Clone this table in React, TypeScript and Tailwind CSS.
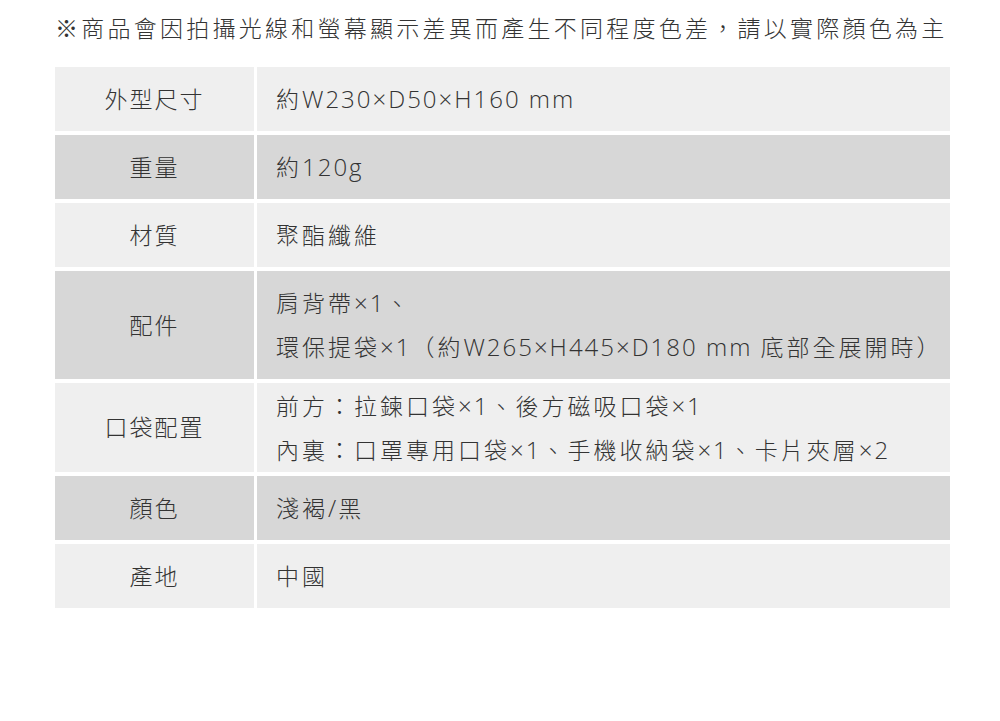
import React from "react";

const font = { fontFamily: '"Open Sans", "Noto Sans CJK TC", sans-serif' };

type Row = { label: string; lines: string[]; h: string; dark: boolean };

const rows: Row[] = [
  { label: "外型尺寸", lines: ["約W230×D50×H160 mm"], h: "h-[64px]", dark: false },
  { label: "重量", lines: ["約120g"], h: "h-[64px]", dark: true },
  { label: "材質", lines: ["聚酯纖維"], h: "h-[64px]", dark: false },
  {
    label: "配件",
    lines: ["肩背帶×1、", "環保提袋×1（約W265×H445×D180 mm 底部全展開時）"],
    h: "h-[108px]",
    dark: true,
  },
  {
    label: "口袋配置",
    lines: ["前方：拉鍊口袋×1、後方磁吸口袋×1", "內裏：口罩專用口袋×1、手機收納袋×1、卡片夾層×2"],
    h: "h-[89px]",
    dark: false,
  },
  { label: "顏色", lines: ["淺褐/黑"], h: "h-[64px]", dark: true },
  { label: "產地", lines: ["中國"], h: "h-[64px]", dark: false },
];

function Mixed({ text }: { text: string }) {
  const parts = text.split(/([A-Za-z0-9×\/ .]+)/).filter((p) => p.length > 0);
  return (
    <>
      {parts.map((p, i) =>
        /^[A-Za-z0-9×\/ .]+$/.test(p) ? (
          <span key={i} className="text-[24px] tracking-[2px]">
            {p}
          </span>
        ) : (
          <span key={i} className="tracking-[3px]">
            {p}
          </span>
        )
      )}
    </>
  );
}

export default function App() {
  return (
    <div className="w-[1000px] h-[721px] bg-white text-[#333]" style={font}>
      <div className="pl-[55px] pt-[12px] h-[67px]">
        <p className="text-[23px] leading-[32px] tracking-[3.25px] font-light whitespace-nowrap">
          ※商品會因拍攝光線和螢幕顯示差異而產生不同程度色差，請以實際顏色為主
        </p>
      </div>
      <div className="ml-[55px] w-[895px] grid grid-cols-[199px_1fr] gap-x-[3px] gap-y-[4px]">
        {rows.map((r) => {
          const bg = r.dark ? "bg-[#d7d7d7]" : "bg-[#efefef]";
          return (
            <React.Fragment key={r.label}>
              <div className={`${bg} ${r.h} flex items-center justify-center text-[23px] tracking-[2px] font-light`}>
                {r.label}
              </div>
              <div className={`${bg} ${r.h} flex flex-col justify-center pl-[19px] text-[23px] font-light`}>
                {r.lines.map((l, i) => (
                  <div key={i} className="leading-[44px] whitespace-nowrap">
                    <Mixed text={l} />
                  </div>
                ))}
              </div>
            </React.Fragment>
          );
        })}
      </div>
    </div>
  );
}
